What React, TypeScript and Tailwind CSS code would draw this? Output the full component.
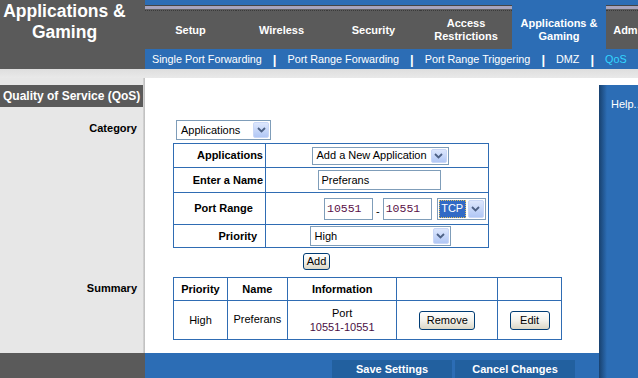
import React from "react";

const tabs = [
  { lines: ["Setup"], w: "w-[91px]" },
  { lines: ["Wireless"], w: "w-[91px]" },
  { lines: ["Security"], w: "w-[93px]" },
  { lines: ["Access", "Restrictions"], w: "w-[92px]" },
  { lines: ["Applications &", "Gaming"], w: "w-[94px]", active: true },
  { lines: ["Administration"], w: "w-[92px]" },
];

const subTabs = [
  "Single Port Forwarding",
  "Port Range Forwarding",
  "Port Range Triggering",
  "DMZ",
  "QoS",
];

function Chevron() {
  return (
    <svg width="9" height="6" viewBox="0 0 9 6">
      <path d="M1 1 L4.5 4.5 L8 1" fill="none" stroke="#4d6185" strokeWidth="1.8" />
    </svg>
  );
}

function ArrowBox({ className = "" }: { className?: string }) {
  return (
    <span
      className={`flex w-[16px] shrink-0 items-center justify-center rounded-[2px] border border-[#c9d7f7] bg-linear-to-b from-[#dde7fd] to-[#b1c7f5] ${className}`}
    >
      <Chevron />
    </span>
  );
}

function Select({ value, className }: { value: string; className: string }) {
  return (
    <div className={`flex items-stretch border border-[#7f9db9] bg-white p-px ${className}`}>
      <span className="flex flex-1 items-center whitespace-nowrap pl-[3px] text-[11px] text-black">
        {value}
      </span>
      <ArrowBox />
    </div>
  );
}

function XpButton({ label, className }: { label: string; className: string }) {
  return (
    <button
      className={`rounded-[3px] border border-[#003c74] bg-linear-to-b from-white via-[#f3f2ec] to-[#dbd7c6] text-[11px] leading-none text-black ${className}`}
    >
      {label}
    </button>
  );
}

function Tab({ lines, w, active }: { lines: string[]; w: string; active?: boolean }) {
  return (
    <div className={`flex shrink-0 flex-col ${w} ${active ? "bg-[#2c6db5]" : ""}`}>
      {active ? (
        <div className="h-[11px]" />
      ) : (
        <>
          <div className="h-[5px] bg-[#2c6db5]" />
          <div className="h-px bg-[#454545]" />
          <div className="h-[3px] bg-[#a7a4bd]" />
          <div className="h-px bg-[#606060]" />
          <div className="h-px border-b border-dotted border-[#3a3a3a]" />
        </>
      )}
      <div className="flex flex-1 flex-col items-center justify-center text-[11px] leading-[13px] font-bold text-white">
        {lines.map((l) => (
          <span key={l} className="whitespace-nowrap">
            {l}
          </span>
        ))}
      </div>
    </div>
  );
}

export default function App() {
  return (
    <div className="flex h-[378px] w-[638px] flex-col overflow-hidden bg-white font-['Liberation_Sans',Arial,sans-serif]">
      {/* header */}
      <div className="flex h-[69px] shrink-0">
        <div className="w-[145px] shrink-0 bg-[#5a5a5a] pt-[1px] pr-[16px] text-center text-[17.5px] leading-[21px] font-bold text-white">
          Applications &amp;
          <br />
          Gaming
        </div>
        <div className="flex min-w-0 flex-1 flex-col">
          <div className="flex h-[49px] overflow-hidden bg-[#5a5a5a]">
            {tabs.map((t) => (
              <Tab key={t.lines[0]} lines={t.lines} w={t.w} active={t.active} />
            ))}
          </div>
          <div className="flex h-[20px] items-center whitespace-nowrap bg-[#2c6db5] pl-[7px] text-[10.8px] text-white">
            {subTabs.map((s, i) => (
              <React.Fragment key={s}>
                {i > 0 && <span className="mx-[11px] text-[13px] leading-none font-bold">|</span>}
                <span className={i === 4 ? "text-[#33d6ff]" : ""}>{s}</span>
              </React.Fragment>
            ))}
          </div>
        </div>
      </div>

      <div className="h-[9px] shrink-0 bg-linear-to-b from-[#dedede] to-[#e9e9e9]" />

      {/* body */}
      <div className="flex h-[275px] shrink-0">
        <div className="flex w-[145px] shrink-0">
          <div className="flex flex-1 flex-col bg-[#e7e7e7]">
            <div className="mt-[7px] flex h-[22px] items-center whitespace-nowrap bg-[#5a5a5a] pl-[3px] text-[12px] font-bold text-white">
              Quality of Service (QoS)
            </div>
            <div className="mt-[14px] pr-[6px] text-right text-[11px] leading-[14px] font-bold text-black">
              Category
            </div>
            <div className="mt-[146px] pr-[6px] text-right text-[11px] leading-[14px] font-bold text-black">
              Summary
            </div>
          </div>
          <div className="w-[2px] bg-linear-to-r from-[#d6d6d6] to-[#bcbcbc]" />
        </div>

        <div className="w-[454px] shrink-0 bg-white pt-[42px] pl-[28px] text-[11px] text-black">
          <Select value="Applications" className="ml-[3px] h-[20px] w-[95px]" />

          <table className="mt-[3px] w-[316px] border-collapse">
            <tbody>
              <tr className="h-[24px]">
                <td className="w-[92px] border border-[#2f6cb3] pr-[2px] text-right font-bold">
                  Applications
                </td>
                <td className="border border-[#2f6cb3]">
                  <div className="flex justify-center pl-[6px]">
                    <Select value="Add a New Application" className="h-[18px] w-[137px]" />
                  </div>
                </td>
              </tr>
              <tr className="h-[25px]">
                <td className="border border-[#2f6cb3] pr-[2px] text-right font-bold">Enter a Name</td>
                <td className="border border-[#2f6cb3]">
                  <div className="flex justify-center pl-[4px]">
                    <div className="flex h-[20px] w-[123px] items-center border border-[#7f9db9] pl-[3px]">
                      Preferans
                    </div>
                  </div>
                </td>
              </tr>
              <tr className="h-[32px]">
                <td className="border border-[#2f6cb3] pl-[8px] text-center font-bold">Port Range</td>
                <td className="border border-[#2f6cb3]">
                  <div className="flex items-center pl-[58px]">
                    <div className="flex h-[22px] w-[49px] items-center border border-[#7f9db9] pl-[2px] font-['Liberation_Mono','Courier_New',monospace] text-[11.5px] text-[#5a1148]">
                      10551
                    </div>
                    <span className="mx-[3px] mt-[5px]">-</span>
                    <div className="flex h-[22px] w-[49px] items-center border border-[#7f9db9] pl-[2px] font-['Liberation_Mono','Courier_New',monospace] text-[11.5px] text-[#5a1148]">
                      10551
                    </div>
                    <div className="ml-[5px] flex h-[22px] w-[49px] items-stretch gap-[2px] border border-[#7f9db9] p-px">
                      <span className="flex w-[27px] items-center justify-center border border-dotted border-[#e0c060] bg-[#316ac5] text-white">
                        TCP
                      </span>
                      <ArrowBox />
                    </div>
                  </div>
                </td>
              </tr>
              <tr className="h-[23px]">
                <td className="border border-[#2f6cb3] pr-[8px] text-right font-bold">Priority</td>
                <td className="border border-[#2f6cb3]">
                  <div className="flex justify-center pl-[6px]">
                    <Select value="High" className="h-[20px] w-[141px]" />
                  </div>
                </td>
              </tr>
            </tbody>
          </table>

          <div className="mt-[5px] pl-[130px]">
            <XpButton label="Add" className="h-[17px] w-[27px]" />
          </div>

          <table className="mt-[7px] w-[389px] border-collapse text-center">
            <tbody>
              <tr className="h-[23px] font-bold">
                <td className="w-[54px] border border-[#2f6cb3]">Priority</td>
                <td className="w-[60px] border border-[#2f6cb3]">Name</td>
                <td className="w-[110px] border border-[#2f6cb3]">Information</td>
                <td className="w-[101px] border border-[#2f6cb3]"></td>
                <td className="w-[64px] border border-[#2f6cb3]"></td>
              </tr>
              <tr className="h-[39px]">
                <td className="border border-[#2f6cb3]">High</td>
                <td className="border border-[#2f6cb3] pb-[2px]">Preferans</td>
                <td className="border border-[#2f6cb3] leading-[14px]">
                  Port
                  <br />
                  <span className="text-[#4a0f45]">10551-10551</span>
                </td>
                <td className="border border-[#2f6cb3]">
                  <XpButton label="Remove" className="h-[19px] w-[56px]" />
                </td>
                <td className="border border-[#2f6cb3]">
                  <XpButton label="Edit" className="h-[19px] w-[40px]" />
                </td>
              </tr>
            </tbody>
          </table>
        </div>

        <div className="flex flex-1 flex-col">
          <div className="h-[7px] bg-white" />
          <div className="flex flex-1">
            <div className="w-[8px] bg-linear-to-r from-[#18416f] to-[#2c6db5]" />
            <div className="flex-1 bg-[#2c6db5] pt-[11px] pl-[4px] text-[11px] text-white">Help...</div>
          </div>
        </div>
      </div>

      {/* footer */}
      <div className="flex h-[25px] shrink-0">
        <div className="w-[145px] shrink-0 bg-[#5a5a5a]" />
        <div className="flex w-[454px] shrink-0 gap-[3px] bg-[#2c6db5] pt-[7px] pl-[187px]">
          <div className="flex h-[18px] w-[120px] items-center justify-center bg-[#22609f] text-[11px] font-bold text-white">
            Save Settings
          </div>
          <div className="flex h-[18px] w-[120px] items-center justify-center bg-[#22609f] text-[11px] font-bold text-white">
            Cancel Changes
          </div>
        </div>
        <div className="w-[8px] bg-linear-to-r from-[#18416f] to-[#2c6db5]" />
        <div className="flex-1 bg-[#2c6db5]" />
      </div>
    </div>
  );
}
